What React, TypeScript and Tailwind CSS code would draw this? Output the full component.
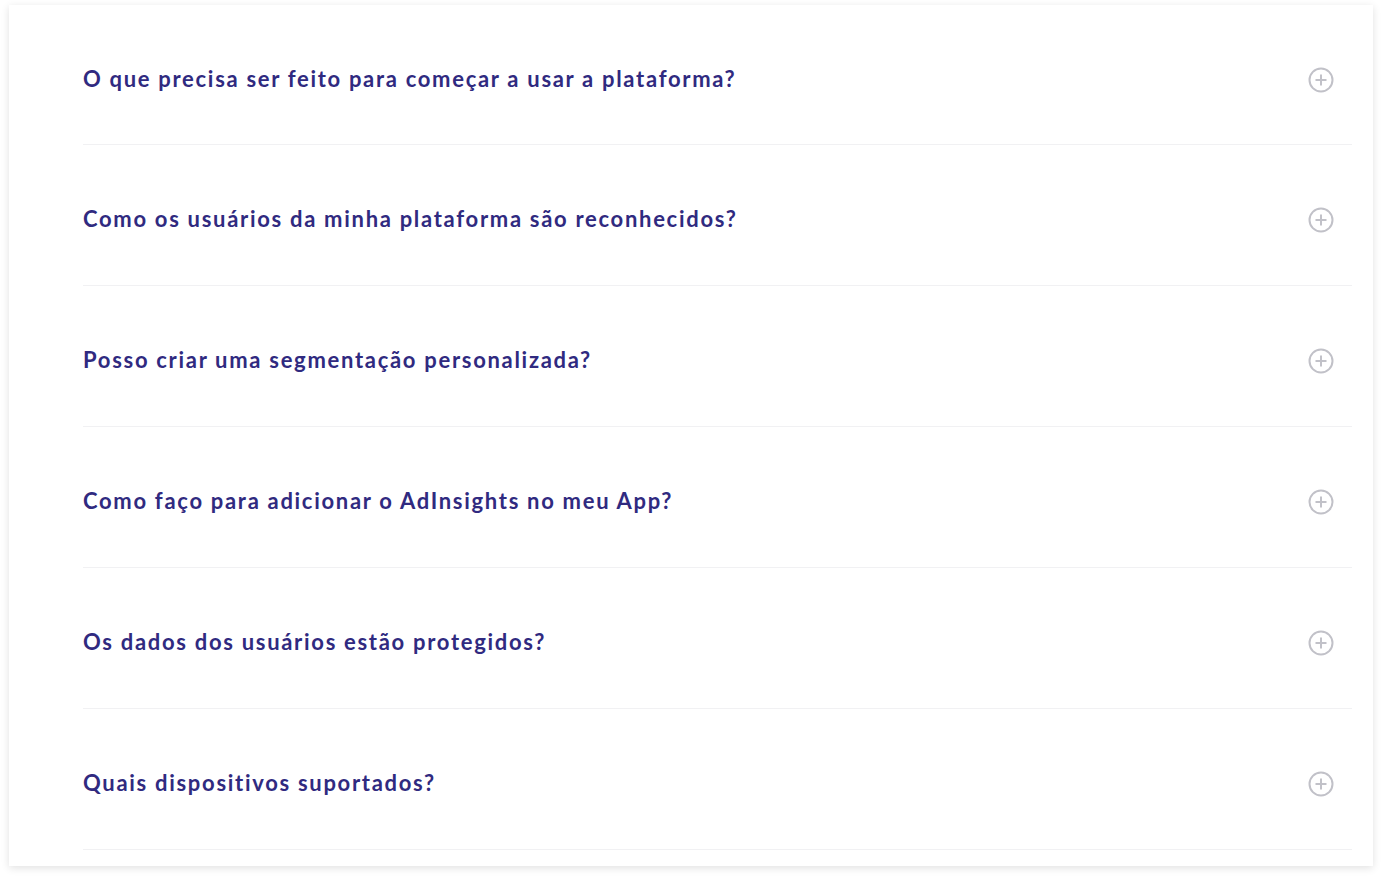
const perguntas = [
  "O que precisa ser feito para começar a usar a plataforma?",
  "Como os usuários da minha plataforma são reconhecidos?",
  "Posso criar uma segmentação personalizada?",
  "Como faço para adicionar o AdInsights no meu App?",
  "Os dados dos usuários estão protegidos?",
  "Quais dispositivos suportados?",
];

const PlusIcon = () => (
  <svg width="26" height="26" viewBox="0 0 26 26" fill="none" className="shrink-0">
    <circle cx="13" cy="13" r="11.5" stroke="#c1c1c8" strokeWidth="2" />
    <path d="M13 7.5v11M7.5 13h11" stroke="#c1c1c8" strokeWidth="2" />
  </svg>
);

const App = () => {
  return (
    <div className="min-h-screen bg-white pt-[5px] pl-[9px] pr-[9px]">
      <div className="bg-white w-[1364px] h-[861px] shadow-[0_2px_8px_rgba(0,0,0,0.12)] pl-[74px] pr-[21px]">
        {perguntas.map((p, i) => (
          <div
            key={i}
            className="flex items-center justify-between h-[141px] pt-[10px] border-b border-[#f1f1f3] first:h-[140px]"
          >
            <p
              className="text-[22px] leading-[26px] font-bold tracking-[1.7px] text-[#302a80] -mt-[2px]"
              style={{ fontFamily: "Lato, 'Noto Sans', sans-serif" }}
            >
              {p}
            </p>
            <div className="mr-[18px]">
              <PlusIcon />
            </div>
          </div>
        ))}
      </div>
    </div>
  );
};

export default App;
